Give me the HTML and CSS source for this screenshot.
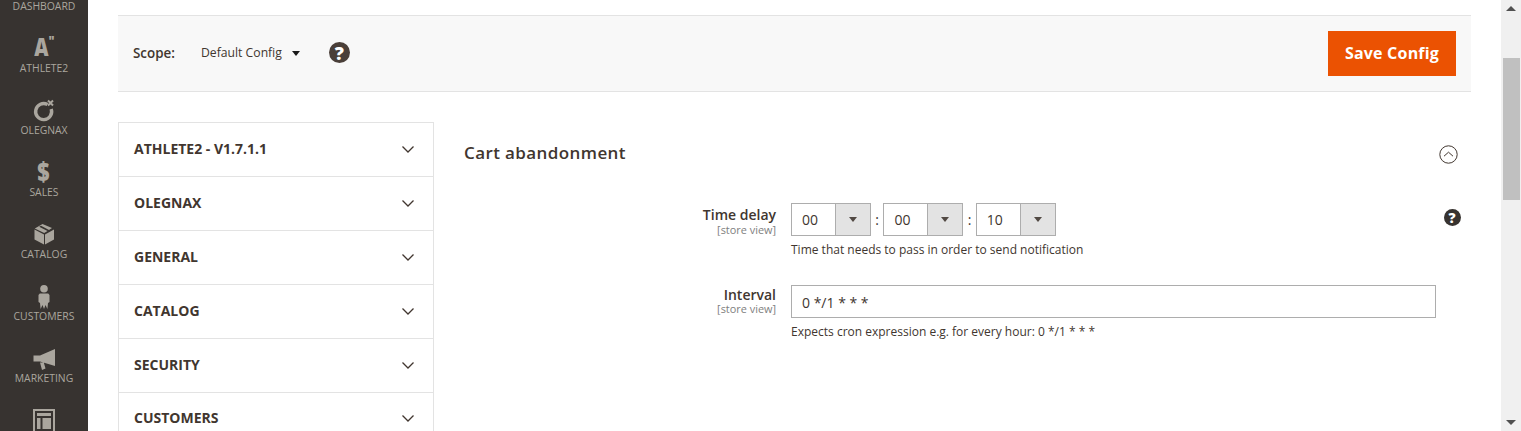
FILE: index.html
```html
<!DOCTYPE html>
<html lang="en">

<head>
  <meta charset="UTF-8" />
  <title>Configuration</title>
  <link rel="stylesheet" href="styles.css">
</head>

<body>
  <div class="page">
    <nav class="menu">
      <a class="menu-item">
        <span class="menu-icon"></span>
        <span>Dashboard</span>
      </a>
      <a class="menu-item">
        <span class="menu-icon menu-glyph">A<sup>"</sup></span>
        <span>Athlete2</span>
      </a>
      <a class="menu-item">
        <span class="menu-icon">
          <svg width="24" height="24" viewBox="0 0 24 24">
            <path d="M15.500 5.600A8 8 0 1 0 19.200 10" fill="none" stroke="#aaa69e" stroke-width="3.400" />
            <path d="M16 1.500l5 5M21 1.500l-5 5" fill="none" stroke="#aaa69e" stroke-width="2" />
          </svg>
        </span>
        <span>Olegnax</span>
      </a>
      <a class="menu-item">
        <span class="menu-icon menu-glyph menu-dollar">$</span>
        <span>Sales</span>
      </a>
      <a class="menu-item">
        <span class="menu-icon">
          <svg width="24" height="24" viewBox="0 0 24 24">
            <path d="M2.500 6.500L12 11.500v10l-9.500-5zM22 6.500L13 11.500v10l9-5zM2.800 5.500L10.500 1 20 5l-3 2L9 2.800l-1.800 1 8.300 4.300-3.300 2z" fill="#aaa69e" />
          </svg>
        </span>
        <span>Catalog</span>
      </a>
      <a class="menu-item">
        <span class="menu-icon">
          <svg width="24" height="24" viewBox="0 0 24 24">
            <circle cx="12" cy="3.800" r="3.800" fill="#aaa69e" />
            <path d="M7.800 8.500h8.400l1.300 1.500v7l-1.500 1-.6 6-1.900-4-1.500 4-1.500-4-1.900 4-.6-6-1.500-1v-7z" fill="#aaa69e" />
          </svg>
        </span>
        <span>Customers</span>
      </a>
      <a class="menu-item">
        <span class="menu-icon">
          <svg width="24" height="24" viewBox="0 0 24 24">
            <path d="M23 2v17L8 14.500H1.500v-6H8zM8 15.500h3.800l1.700 6-3.500 1.500z" fill="#aaa69e" />
          </svg>
        </span>
        <span>Marketing</span>
      </a>
      <a class="menu-item">
        <span class="menu-icon">
          <svg width="24" height="24" viewBox="0 3 24 24">
            <path d="M1 3h22v24H1zM3 5v20h18V5zM5 7h14v3H5zM5 12h3.500v11H5zM10.500 12H19v11h-8.500z" fill="#aaa69e" fill-rule="evenodd" />
          </svg>
        </span>
      </a>
    </nav>

    <main class="main">
      <div class="toolbar">
        <div class="scope">
          <span class="scope-label">Scope:</span>
          <span class="scope-value">Default Config</span>
          <span class="scope-caret"></span>
          <span class="help help-large">?</span>
        </div>
        <button class="save" type="button">Save Config</button>
      </div>

      <div class="columns">
        <ul class="tabs">
          <li class="tab"><span>ATHLETE2 - V1.7.1.1</span>
            <svg class="chevron" width="12" height="7" viewBox="0 0 12 7"><path d="M.5.500L6 6 11.500.500" /></svg>
          </li>
          <li class="tab"><span>OLEGNAX</span>
            <svg class="chevron" width="12" height="7" viewBox="0 0 12 7"><path d="M.5.500L6 6 11.500.500" /></svg>
          </li>
          <li class="tab"><span>GENERAL</span>
            <svg class="chevron" width="12" height="7" viewBox="0 0 12 7"><path d="M.5.500L6 6 11.500.500" /></svg>
          </li>
          <li class="tab"><span>CATALOG</span>
            <svg class="chevron" width="12" height="7" viewBox="0 0 12 7"><path d="M.5.500L6 6 11.500.500" /></svg>
          </li>
          <li class="tab"><span>SECURITY</span>
            <svg class="chevron" width="12" height="7" viewBox="0 0 12 7"><path d="M.5.500L6 6 11.500.500" /></svg>
          </li>
          <li class="tab tab-last"><span>CUSTOMERS</span>
            <svg class="chevron" width="12" height="7" viewBox="0 0 12 7"><path d="M.5.500L6 6 11.500.500" /></svg>
          </li>
        </ul>

        <section class="panel">
          <div class="panel-head">
            <h2>Cart abandonment</h2>
            <span class="collapse">
              <svg width="19" height="19" viewBox="0 0 19 19">
                <circle cx="9.500" cy="9.500" r="8.700" fill="none" stroke="#41362f" />
                <path d="M5 11.200l4.500-4 4.500 4" fill="none" stroke="#41362f" />
              </svg>
            </span>
          </div>

          <div class="field field-time">
            <div class="field-label">
              <label>Time delay</label>
              <small>[store view]</small>
            </div>
            <div class="field-control">
              <div class="time-row">
                <div class="select"><span>00</span><i></i></div>
                <span class="colon">:</span>
                <div class="select"><span>00</span><i></i></div>
                <span class="colon">:</span>
                <div class="select"><span>10</span><i></i></div>
              </div>
              <p class="note">Time that needs to pass in order to send notification</p>
            </div>
            <span class="help help-small">?</span>
          </div>

          <div class="field field-interval">
            <div class="field-label">
              <label>Interval</label>
              <small>[store view]</small>
            </div>
            <div class="field-control">
              <div class="text-input">0 */1 * * *</div>
              <p class="note">Expects cron expression e.g. for every hour: 0 */1 * * *</p>
            </div>
          </div>
        </section>
      </div>
    </main>

    <div class="scrollbar">
      <span class="arrow-up"></span>
      <span class="thumb"></span>
      <span class="arrow-down"></span>
    </div>
  </div>
</body>

</html>
```

FILE: styles.css
```css
* {
  box-sizing: border-box;
}

html,
body {
  margin: 0;
  height: 431px;
  overflow: hidden;
}

body {
  font-family: "Open Sans", sans-serif;
  color: #41362f;
  background: #fff;
}

.page {
  display: flex;
  height: 431px;
  overflow: hidden;
}

.menu {
  flex: 0 0 88px;
  background: #373330;
  height: 431px;
  overflow: hidden;
  color: #aaa69e;
  font-size: 10.400px;
}

.menu-item {
  display: flex;
  flex-direction: column;
  align-items: center;
  height: 62px;
  text-transform: uppercase;
  line-height: 14px;
}

.menu-item:first-child {
  margin-top: -32px;
}

.menu-icon {
  display: flex;
  align-items: center;
  justify-content: center;
  height: 24px;
  margin-top: 7px;
}

.menu-glyph {
  height: 22px;
  margin-top: 6px;
  margin-bottom: 3px;
  font-size: 24px;
  font-weight: 800;
  color: #aaa69e;
  text-transform: none;
  transform: scaleX(0.82);
}

.menu-glyph sup {
  font-size: 14px;
  line-height: 10px;
  align-self: flex-start;
  margin-top: 0;
}

.menu-dollar {
  font-size: 26px;
}

.main {
  flex: 1;
  padding: 15px 30px 0;
  min-width: 0;
}

.toolbar {
  display: flex;
  align-items: center;
  justify-content: space-between;
  height: 77px;
  padding: 0 15px;
  background: #f8f8f8;
  border-top: 1px solid #e3e3e3;
  border-bottom: 1px solid #e3e3e3;
}

.scope {
  display: flex;
  align-items: center;
  margin-top: -2px;
  font-size: 12px;
}

.scope-label {
  font-size: 13.400px;
  font-weight: 600;
  width: 68px;
}

.scope-value {
  color: #41362f;
  font-size: 12.200px;
}

.scope-caret {
  margin: 2px 0 0 10px;
  border-top: 5px solid #1a1a1a;
  border-left: 4.500px solid transparent;
  border-right: 4.500px solid transparent;
}

.help {
  display: flex;
  align-items: center;
  justify-content: center;
  border-radius: 50%;
  color: #fff;
  font-weight: 800;
}

.help-large {
  width: 21px;
  height: 21px;
  margin-left: 29px;
  background: #4a3f39;
  font-size: 18px;
}

.help-small {
  flex: none;
  width: 17px;
  height: 17px;
  margin: 6px 0 0 7.500px;
  background: #373330;
  font-size: 14px;
}

.save {
  width: 128px;
  height: 45px;
  margin: 0;
  padding: 0 0 2px;
  border: 0;
  background: #eb5202;
  color: #fff;
  font-family: "Open Sans", sans-serif;
  font-size: 16px;
  font-weight: 700;
  letter-spacing: 0.2px;
}

.columns {
  display: flex;
  margin-top: 30px;
}

.tabs {
  flex: 0 0 316px;
  margin: 0;
  padding: 0;
  list-style: none;
  border: 1px solid #e3e3e3;
  border-bottom: 0;
}

.tab {
  display: flex;
  align-items: center;
  justify-content: space-between;
  height: 54px;
  padding: 0 19px 2px 15px;
  border-bottom: 1px solid #e3e3e3;
  font-size: 14px;
  font-weight: 700;
  color: #41362f;
}

.tab-last {
  padding-bottom: 4px;
}

.chevron {
  margin-top: 2px;
  fill: none;
  stroke: #41362f;
  stroke-width: 1.300;
}

.panel {
  flex: 1;
  padding-left: 30px;
}

.panel-head {
  display: flex;
  align-items: center;
  justify-content: space-between;
  height: 60px;
  padding-right: 13px;
}

.panel-head h2 {
  margin: 0;
  font-size: 17px;
  font-weight: 600;
  letter-spacing: 0.400px;
}

.collapse {
  display: flex;
  margin-top: 4px;
}

.field {
  display: flex;
}

.field-time {
  margin: 21px 0 27px;
}

.field-label {
  flex: 0 0 312px;
  padding-top: 2px;
  text-align: right;
}

.field-interval .field-label {
  padding-top: 0;
}

.field-label label {
  display: block;
  font-size: 14px;
  font-weight: 600;
  line-height: 19px;
}

.field-label small {
  display: block;
  font-size: 10.900px;
  line-height: 12px;
  color: #808080;
}

.field-interval .field-label small {
  margin-top: -1px;
}

.field-control {
  flex: 0 0 645px;
  margin-left: 15px;
}

.time-row {
  display: flex;
  align-items: center;
}

.select {
  display: flex;
  align-items: center;
  width: 80px;
  height: 33px;
  border: 1px solid #adadad;
  font-size: 14px;
}

.select span {
  flex: 1;
  padding-left: 10px;
}

.select i {
  display: flex;
  align-items: center;
  justify-content: center;
  width: 35px;
  height: 31px;
  background: #e3e3e3;
  border-left: 1px solid #adadad;
}

.select i::after {
  content: "";
  border-top: 5px solid #514943;
  border-left: 4px solid transparent;
  border-right: 4px solid transparent;
}

.colon {
  width: 12.400px;
  text-align: center;
  font-size: 14px;
}

.note {
  margin: 5px 0 0;
  font-size: 12px;
  line-height: 17px;
  color: #41362f;
}

.text-input {
  height: 33px;
  padding-left: 10px;
  border: 1px solid #adadad;
  font-size: 14px;
  line-height: 33px;
}

.scrollbar {
  position: relative;
  flex: 0 0 20px;
  background: #f0f0f0;
}

.thumb {
  position: absolute;
  left: 2px;
  top: 58px;
  width: 17px;
  height: 142px;
  background: #c0c0c0;
}

.arrow-up,
.arrow-down {
  position: absolute;
  left: 5px;
  border-left: 5px solid transparent;
  border-right: 5px solid transparent;
}

.arrow-up {
  top: 6px;
  border-bottom: 5px solid #505050;
}

.arrow-down {
  bottom: 6px;
  border-top: 5px solid #505050;
}
```
